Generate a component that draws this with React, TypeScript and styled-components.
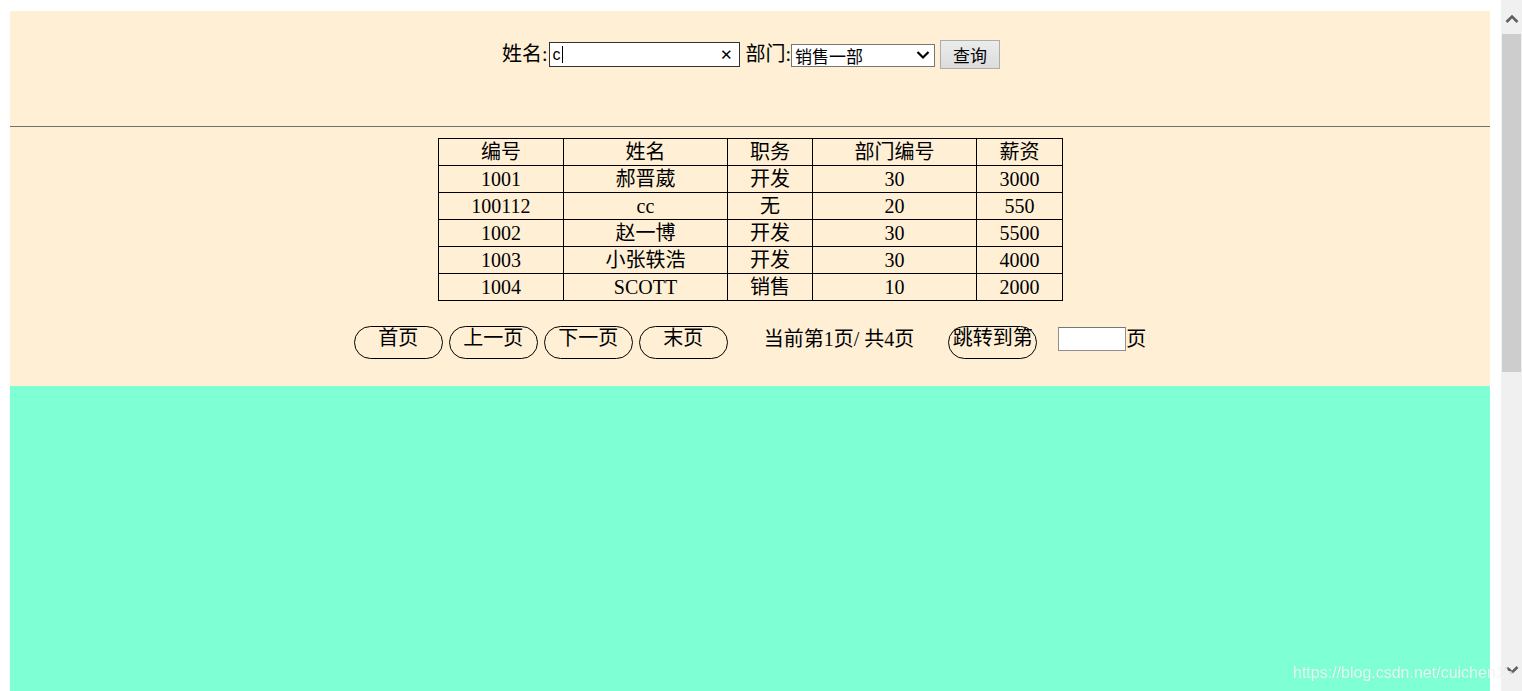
import styled, { createGlobalStyle } from "styled-components";

const GlobalStyle = createGlobalStyle`
  html, body {
    margin: 0;
    padding: 0;
    overflow: hidden;
    background: #ffffff;
  }
  body {
    font-family: "Liberation Serif", "Noto Sans CJK SC", serif;
    font-size: 20px;
    color: #000;
  }
`;

const Page = styled.div`
  width: 1480px;
  padding: 11px 0 0 10px;
`;

const Panel = styled.div`
  background: #ffefd5;
  height: 375px;
`;

const Header = styled.form`
  height: 115px;
  box-sizing: border-box;
  padding-top: 29px;
  display: flex;
  justify-content: center;
  align-items: flex-start;
`;

const Label = styled.span<{ $gap?: number }>`
  line-height: 29px;
  margin-left: ${(p) => p.$gap ?? 0}px;
`;

const SearchField = styled.div`
  width: 191px;
  height: 25px;
  box-sizing: border-box;
  margin: 2px 0 0 1px;
  border: 1px solid #333;
  background: #fff;
  display: flex;
  align-items: center;
  padding: 0 6px 0 3px;
  font-family: "Liberation Sans", "Noto Sans CJK SC", sans-serif;
  font-size: 16px;
`;

const Caret = styled.span`
  width: 1px;
  height: 17px;
  background: #000;
  margin-left: 1px;
`;

const Clear = styled.span`
  margin-left: auto;
  font-size: 15px;
  line-height: 1;
`;

const SelectWrap = styled.div`
  position: relative;
  margin-top: 4px;
`;

const Select = styled.select`
  appearance: none;
  width: 144px;
  height: 23px;
  box-sizing: border-box;
  border: 1px solid #767676;
  border-radius: 0;
  background: #fff;
  padding: 0 0 0 3px;
  font-family: "Noto Sans CJK SC", "Liberation Sans", sans-serif;
  font-size: 17px;
  line-height: 21px;
  color: #000;
`;

const Chevron = styled.svg`
  position: absolute;
  right: 5px;
  top: 6px;
  pointer-events: none;
`;

const QueryButton = styled.button`
  width: 60px;
  height: 29px;
  margin-left: 5px;
  box-sizing: border-box;
  border: 1px solid #adadad;
  background: linear-gradient(#ececec, #dcdcdc);
  font-family: "Noto Sans CJK SC", "Liberation Sans", sans-serif;
  font-size: 17px;
  line-height: 25px;
  padding: 0;
  color: #000;
`;

const Rule = styled.div`
  border-top: 1px solid #707070;
`;

const Body = styled.div`
  padding-top: 11px;
  display: flex;
  flex-direction: column;
  align-items: center;
`;

const Table = styled.table`
  border-collapse: collapse;
  width: 625px;
  table-layout: fixed;
  margin-left: 1px;
`;

const Cell = styled.td`
  border: 1px solid #000;
  height: 26px;
  padding: 0;
  text-align: center;
  line-height: 24px;
`;

const Pager = styled.div`
  margin: 25px 0 0 0;
  display: flex;
  align-items: flex-start;
`;

const PageButton = styled.button<{ $gap?: number }>`
  width: 89px;
  height: 33px;
  box-sizing: border-box;
  margin-left: ${(p) => p.$gap ?? 0}px;
  border: 1px solid #000;
  border-radius: 17px;
  background: transparent;
  padding: 0 0 8px;
  font-family: "Liberation Serif", "Noto Sans CJK SC", serif;
  font-size: 20px;
  line-height: 23px;
  color: #000;
  white-space: nowrap;
  overflow: visible;
`;

const PagerText = styled.span<{ $gap?: number }>`
  margin: 1px 0 0 ${(p) => p.$gap ?? 0}px;
  line-height: 24px;
  white-space: pre;
`;

const JumpInput = styled.input`
  width: 68px;
  height: 24px;
  box-sizing: border-box;
  margin: 1px 0 0 21px;
  border: 1px solid #8f8f8f;
  border-top-color: #767676;
  background: #fff;
  padding: 0;
`;

const Ground = styled.div`
  background: #7fffd4;
  height: 420px;
`;

const Scrollbar = styled.div`
  position: fixed;
  top: 0;
  right: 0;
  width: 21px;
  height: 100%;
  background: #f0f0f0;
  z-index: 1;
`;

const Thumb = styled.div`
  position: absolute;
  left: 1px;
  top: 34px;
  width: 19px;
  height: 338px;
  background: #cdcdcd;
`;

const Arrow = styled.svg<{ $bottom?: boolean }>`
  position: absolute;
  left: 4px;
  ${(p) => (p.$bottom ? "bottom: 16px;" : "top: 14px;")}
`;

const Watermark = styled.div`
  position: fixed;
  left: 1293px;
  bottom: 9px;
  font-family: "Liberation Sans", sans-serif;
  font-size: 16px;
  line-height: 18px;
  color: rgba(255, 255, 255, 0.8);
  text-shadow: 0 0 1px rgba(0, 0, 0, 0.12);
  white-space: nowrap;
  z-index: 2;
`;

const widths = [125, 164, 85, 164];
const headers = ["编号", "姓名", "职务", "部门编号", "薪资"];
const rows = [
  ["1001", "郝晋葳", "开发", "30", "3000"],
  ["100112", "cc", "无", "20", "550"],
  ["1002", "赵一博", "开发", "30", "5500"],
  ["1003", "小张轶浩", "开发", "30", "4000"],
  ["1004", "SCOTT", "销售", "10", "2000"],
];

export default function App() {
  return (
    <>
      <GlobalStyle />
      <Page>
        <Panel>
          <Header onSubmit={(e) => e.preventDefault()}>
            <Label $gap={2}>姓名:</Label>
            <SearchField>
              <span>c</span>
              <Caret />
              <Clear>✕</Clear>
            </SearchField>
            <Label $gap={6}>部门:</Label>
            <SelectWrap>
              <Select defaultValue="1">
                <option value="1">销售一部</option>
                <option value="2">开发部</option>
              </Select>
              <Chevron width="14" height="10" viewBox="0 0 14 10">
                <path d="M1.5 2 L7 7.5 L12.5 2" fill="none" stroke="#000" strokeWidth="2.2" />
              </Chevron>
            </SelectWrap>
            <QueryButton type="submit">查询</QueryButton>
          </Header>
          <Rule />
          <Body>
            <Table>
              <colgroup>
                {widths.map((w, i) => (
                  <col key={i} style={{ width: w }} />
                ))}
                <col />
              </colgroup>
              <tbody>
                <tr>
                  {headers.map((h) => (
                    <Cell key={h}>{h}</Cell>
                  ))}
                </tr>
                {rows.map((r) => (
                  <tr key={r[0]}>
                    {r.map((v, i) => (
                      <Cell key={i}>{v}</Cell>
                    ))}
                  </tr>
                ))}
              </tbody>
            </Table>
            <Pager>
              <PageButton>首页</PageButton>
              <PageButton $gap={6}>上一页</PageButton>
              <PageButton $gap={6}>下一页</PageButton>
              <PageButton $gap={6}>末页</PageButton>
              <PagerText $gap={36}>当前第1页/ 共4页</PagerText>
              <PageButton $gap={34}>跳转到第</PageButton>
              <JumpInput type="text" />
              <PagerText>页</PagerText>
            </Pager>
          </Body>
        </Panel>
        <Ground />
      </Page>
      <Scrollbar>
        <Arrow width="14" height="10" viewBox="0 0 14 10">
          <path d="M1.5 8 L7 2.5 L12.5 8" fill="none" stroke="#606060" strokeWidth="2.6" />
        </Arrow>
        <Thumb />
        <Arrow $bottom width="14" height="10" viewBox="0 0 14 10">
          <path d="M1.5 2 L7 7.5 L12.5 2" fill="none" stroke="#606060" strokeWidth="2.6" />
        </Arrow>
      </Scrollbar>
      <Watermark>https://blog.csdn.net/cuichen15</Watermark>
    </>
  );
}
